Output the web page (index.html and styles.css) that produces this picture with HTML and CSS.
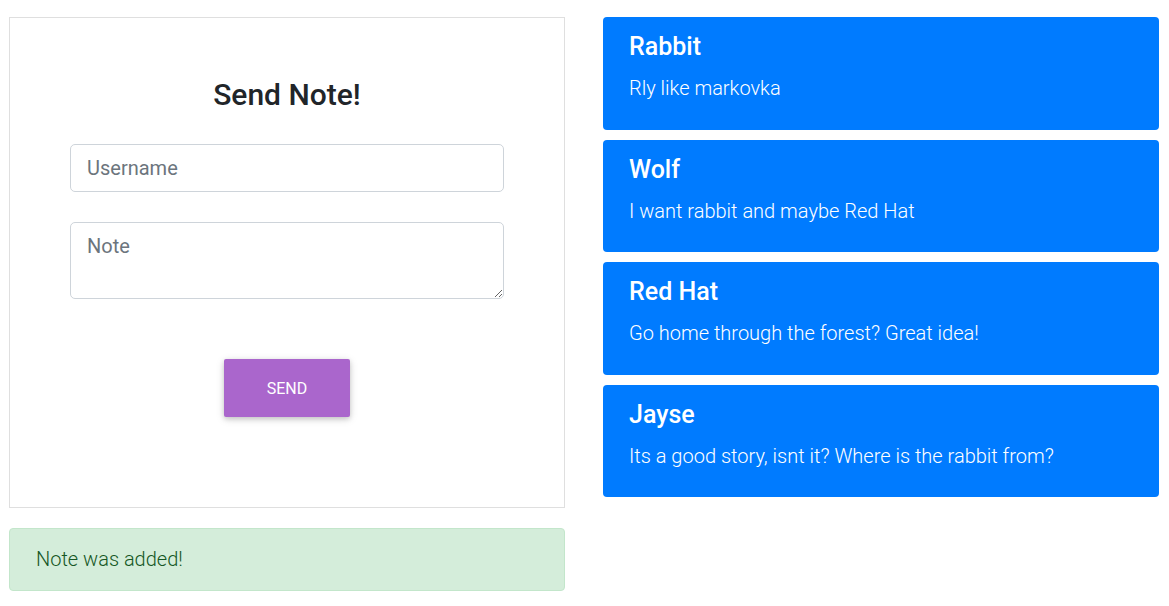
FILE: index.html
```html
<!DOCTYPE html>
<html lang="en">
<head>
<meta charset="utf-8">
<title>Notes</title>
<link rel="stylesheet" href="styles.css">
</head>
<body>
<div class="page">
  <div class="col-left">
    <form class="form-card">
      <h3 class="form-title">Send Note!</h3>
      <input class="field" type="text" placeholder="Username">
      <textarea class="field field-area" placeholder="Note"></textarea>
      <button class="btn-send" type="button">Send</button>
    </form>
    <div class="alert-success">Note was added!</div>
  </div>
  <div class="col-right">
    <div class="note">
      <h4 class="note-title">Rabbit</h4>
      <p class="note-text">Rly like markovka</p>
    </div>
    <div class="note">
      <h4 class="note-title">Wolf</h4>
      <p class="note-text">I want rabbit and maybe Red Hat</p>
    </div>
    <div class="note">
      <h4 class="note-title">Red Hat</h4>
      <p class="note-text">Go home through the forest? Great idea!</p>
    </div>
    <div class="note">
      <h4 class="note-title">Jayse</h4>
      <p class="note-text">Its a good story, isnt it? Where is the rabbit from?</p>
    </div>
  </div>
</div>
</body>
</html>
```

FILE: styles.css
```css
* { box-sizing: border-box; }

html, body {
  margin: 0;
  padding: 0;
  background: #fff;
  font-family: Roboto, "Noto Sans", Arial, sans-serif;
  color: #212529;
}

.page {
  display: flex;
  gap: 38px;
  padding: 17px 10px 0 9px;
}

.col-left,
.col-right {
  width: 556px;
  flex: 0 0 556px;
  display: flex;
  flex-direction: column;
}

.col-left { gap: 20px; }
.col-right { gap: 10px; }

.form-card {
  border: 1px solid #dfdfdf;
  height: 491px;
  padding: 59px 0 0;
  display: flex;
  flex-direction: column;
  align-items: center;
}

.form-title {
  margin: 0 0 31px;
  font-size: 30px;
  line-height: 36px;
  font-weight: 500;
  color: #212529;
  text-align: center;
}

.field {
  display: block;
  width: 434px;
  height: 48px;
  padding: 0 16px;
  border: 1px solid #ced4da;
  border-radius: 5px;
  font-family: Roboto, "Noto Sans", Arial, sans-serif;
  font-size: 20px;
  font-weight: 400;
  color: #495057;
  background: #fff;
  outline: none;
}

.field::placeholder { color: #6c757d; opacity: 1; }

.field-area {
  margin-top: 30px;
  height: 77px;
  padding: 9px 16px;
  line-height: 28px;
  resize: vertical;
}

.btn-send {
  margin-top: 60px;
  width: 126px;
  height: 58px;
  border: none;
  border-radius: 2px;
  background: #aa66cc;
  color: #fff;
  font-family: Roboto, "Noto Sans", Arial, sans-serif;
  font-size: 16px;
  font-weight: 400;
  text-transform: uppercase;
  box-shadow: 0 2px 5px 0 rgba(0,0,0,.16), 0 2px 10px 0 rgba(0,0,0,.12);
  cursor: pointer;
}

.alert-success {
  height: 63px;
  padding: 0 26px 1px;
  display: flex;
  align-items: center;
  background: #d4edda;
  border: 1px solid #c3e6cb;
  border-radius: 4px;
  color: #155724;
  font-size: 20px;
  font-weight: 300;
  line-height: 30px;
}

.note {
  background: #007bff;
  color: #fff;
  border-radius: 4px;
  padding: 15px 26px 26.5px;
}

.note-title {
  margin: 0;
  font-size: 25px;
  line-height: 30px;
  font-weight: 500;
}

.note-text {
  margin: 11px 0 0;
  font-size: 20px;
  line-height: 30px;
  font-weight: 300;
}
```
